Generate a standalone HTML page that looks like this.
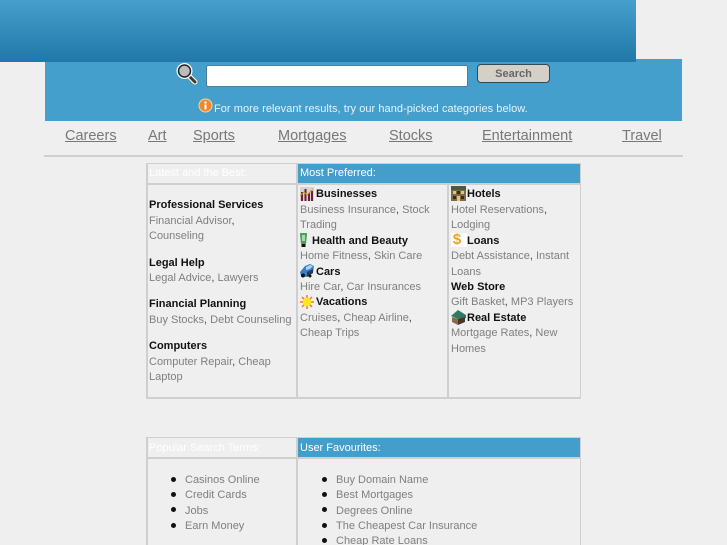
<!DOCTYPE html>
<html><head><meta charset="utf-8"><style>
html,body{margin:0;padding:0;width:727px;height:545px;overflow:hidden;background:#efefef;font-family:"Liberation Sans",sans-serif}
#w{position:absolute;left:0;top:0;width:727px;height:545px;overflow:hidden;filter:blur(.35px)}
.a{position:absolute}
.t{position:absolute;white-space:nowrap;line-height:16px;font-size:11px;color:#7f7f7f;margin-top:1px}
.b{color:#111;font-weight:bold}
.h{color:#fff;font-size:11px}
.d{color:#444}
.n{position:absolute;white-space:nowrap;font-size:14.5px;line-height:20px;color:#777;text-decoration:underline;top:126px}
.g{position:absolute;background:#cfcfcf}
.bl{position:absolute;background:#439ecb}
.dot{position:absolute;width:5px;height:5px;border-radius:50%;background:#111}
svg{position:absolute}
</style></head><body><div id="w">
<div class="a" style="left:45px;top:59px;width:637px;height:62px;background:#459fcc"></div>
<div class="a" style="left:0;top:0;width:636px;height:62px;background:linear-gradient(#469fcb,#1f78a9)"></div>

<svg style="left:176px;top:63px" width="23" height="22" viewBox="0 0 23 22"><path d="M12 12L19 19" stroke="#fff" stroke-width="5" stroke-linecap="round"/><path d="M12 12L19 19" stroke="#4a3520" stroke-width="3" stroke-linecap="round"/><circle cx="8.500" cy="8" r="6.500" fill="#c9ccce" stroke="#fff" stroke-width="3"/><circle cx="8.500" cy="8" r="6" fill="#b9bcbe" stroke="#222" stroke-width="1.500"/></svg>
<div class="a" style="left:206px;top:65px;width:260px;height:20px;background:#fff;border:1px solid #4d7f99;border-radius:2px"></div>
<div class="a" style="left:477px;top:64px;width:71px;height:17px;background:#d4d0c8;border:1px solid #2f4a58;border-radius:4px;text-align:center;font:bold 11px/19px 'Liberation Sans',sans-serif;color:#666">Search</div>
<svg style="left:198px;top:98px" width="15" height="15" viewBox="0 0 15 15"><circle cx="7.500" cy="7.500" r="6.500" fill="#f0892b" stroke="#f7d3a8"/><rect x="6.500" y="6.500" width="2" height="5" fill="#fff"/><rect x="6.500" y="3.500" width="2" height="2" fill="#fff"/></svg>
<div class="t" style="left:214px;top:100px;color:#e8f3f8;letter-spacing:.05px">For more relevant results, try our hand-picked categories below.</div>

<div class="n" style="left:65px">Careers</div>
<div class="n" style="left:148px">Art</div>
<div class="n" style="left:193px">Sports</div>
<div class="n" style="left:278px">Mortgages</div>
<div class="n" style="left:389px">Stocks</div>
<div class="n" style="left:482px">Entertainment</div>
<div class="n" style="left:622px">Travel</div>
<div class="g" style="left:44px;top:155px;width:639px;height:2px"></div>

<!-- table 1 -->
<div class="g" style="left:146px;top:163px;width:435px;height:1px"></div>
<div class="g" style="left:146px;top:397px;width:435px;height:2px"></div>
<div class="g" style="left:146px;top:163px;width:2px;height:236px"></div>
<div class="g" style="left:296px;top:163px;width:2px;height:236px"></div>
<div class="g" style="left:580px;top:163px;width:1px;height:236px"></div>
<div class="g" style="left:447px;top:183px;width:2px;height:216px"></div>
<div class="g" style="left:146px;top:183px;width:435px;height:2px"></div>
<div class="bl" style="left:298px;top:164px;width:282px;height:19px"></div>
<div class="t h" style="left:149px;top:164px">Latest and the Best:</div>
<div class="t h" style="left:300px;top:164px">Most Preferred:</div>

<div class="t b" style="left:149px;top:196px">Professional Services</div>
<div class="t" style="left:149px;top:212px">Financial Advisor<span class="d">,</span></div>
<div class="t" style="left:149px;top:227px">Counseling</div>
<div class="t b" style="left:149px;top:254px">Legal Help</div>
<div class="t" style="left:149px;top:269px">Legal Advice<span class="d">,</span> Lawyers</div>
<div class="t b" style="left:149px;top:295px">Financial Planning</div>
<div class="t" style="left:149px;top:311px">Buy Stocks<span class="d">,</span> Debt Counseling</div>
<div class="t b" style="left:149px;top:337px">Computers</div>
<div class="t" style="left:149px;top:353px">Computer Repair<span class="d">,</span> Cheap</div>
<div class="t" style="left:149px;top:368px">Laptop</div>

<div class="t b" style="left:316px;top:185px">Businesses</div>
<div class="t" style="left:300px;top:201px">Business Insurance<span class="d">,</span> Stock</div>
<div class="t" style="left:300px;top:216px">Trading</div>
<div class="t b" style="left:312px;top:232px">Health and Beauty</div>
<div class="t" style="left:300px;top:247px">Home Fitness<span class="d">,</span> Skin Care</div>
<div class="t b" style="left:316px;top:263px">Cars</div>
<div class="t" style="left:300px;top:278px">Hire Car<span class="d">,</span> Car Insurances</div>
<div class="t b" style="left:316px;top:293px">Vacations</div>
<div class="t" style="left:300px;top:309px">Cruises<span class="d">,</span> Cheap Airline<span class="d">,</span></div>
<div class="t" style="left:300px;top:324px">Cheap Trips</div>

<div class="t b" style="left:467px;top:185px">Hotels</div>
<div class="t" style="left:451px;top:201px">Hotel Reservations<span class="d">,</span></div>
<div class="t" style="left:451px;top:216px">Lodging</div>
<div class="t b" style="left:467px;top:232px">Loans</div>
<div class="t" style="left:451px;top:247px">Debt Assistance<span class="d">,</span> Instant</div>
<div class="t" style="left:451px;top:263px">Loans</div>
<div class="t b" style="left:451px;top:278px">Web Store</div>
<div class="t" style="left:451px;top:293px">Gift Basket<span class="d">,</span> MP3 Players</div>
<div class="t b" style="left:467px;top:309px">Real Estate</div>
<div class="t" style="left:451px;top:324px">Mortgage Rates<span class="d">,</span> New</div>
<div class="t" style="left:451px;top:340px">Homes</div>

<!-- icons -->
<svg style="left:300px;top:187px" width="14" height="14" viewBox="0 0 14 14"><rect width="14" height="14" fill="#d8d2d8"/><path d="M1 14V5h2v9zM4.500 14V2h2v12zM8 14V6h2v8zM11 14V4h2v10z" fill="#6d1f35"/><path d="M0 9L4 5l3 3 6-6" stroke="#c8a020" fill="none"/></svg>
<svg style="left:300px;top:233px" width="7" height="14" viewBox="0 0 7 14"><path d="M0 0h7v2l-1 9H1L0 2z" fill="#4f9e5e"/><path d="M2 2h3v6H2z" fill="#9fdcae"/><rect x="1.500" y="11" width="4" height="3" fill="#111"/></svg>
<svg style="left:300px;top:264px" width="15" height="14" viewBox="0 0 15 14"><path d="M0 8L5 2l5-2 4 2-1 7-6 4-6-1z" fill="#3a7fc4"/><path d="M6 3l4-2 3 1-3 3-4 1z" fill="#a9d4f0"/><path d="M7 8l6-3 0 4-6 4z" fill="#2a3a55"/><circle cx="3" cy="11.500" r="2" fill="#111"/><circle cx="10" cy="12" r="1.500" fill="#111"/></svg>
<svg style="left:300px;top:295px" width="14" height="14" viewBox="0 0 14 14"><path d="M7 0v14M0 7h14M2 2l10 10M12 2L2 12" stroke="#f07a20" stroke-width="1.500"/><circle cx="7" cy="7" r="4.200" fill="#ffe81a"/></svg>

<svg style="left:451px;top:186px" width="15" height="15" viewBox="0 0 15 15"><rect width="15" height="15" fill="#7d6a4a"/><rect x="0" y="0" width="15" height="4" fill="#4d5a40"/><rect x="2" y="5" width="3" height="3" fill="#e8c85a"/><rect x="6" y="5" width="3" height="3" fill="#3a2c18"/><rect x="10" y="5" width="3" height="3" fill="#e8c85a"/><rect x="2" y="10" width="3" height="3" fill="#3a2c18"/><rect x="6" y="10" width="3" height="5" fill="#e8c85a"/><rect x="10" y="10" width="3" height="3" fill="#3a2c18"/></svg>
<div class="a" style="left:451px;top:233px;width:16px;height:14px;background:#fff"></div>
<div class="a" style="left:451px;top:232px;width:12px;height:16px;font:bold 15px/16px 'Liberation Sans',sans-serif;color:#f0a020;text-align:center">$</div>
<svg style="left:451px;top:310px" width="15" height="15" viewBox="0 0 15 15"><path d="M0 6L7 0l8 5v3l-8 1z" fill="#2f7a62"/><path d="M1 7l6 2v6l-6-3z" fill="#8a6a48"/><path d="M7 9l7-2v5l-7 3z" fill="#4a3626"/></svg>

<!-- table 2 -->
<div class="g" style="left:146px;top:437px;width:435px;height:1px"></div>
<div class="g" style="left:146px;top:437px;width:2px;height:108px"></div>
<div class="g" style="left:296px;top:437px;width:2px;height:108px"></div>
<div class="g" style="left:580px;top:437px;width:1px;height:108px"></div>
<div class="g" style="left:146px;top:457px;width:435px;height:2px"></div>
<div class="bl" style="left:298px;top:438px;width:282px;height:19px"></div>
<div class="t h" style="left:149px;top:439px">Popular Search Terms:</div>
<div class="t h" style="left:300px;top:439px">User Favourites:</div>

<div class="dot" style="left:171px;top:477px"></div>
<div class="dot" style="left:171px;top:492px"></div>
<div class="dot" style="left:171px;top:507px"></div>
<div class="dot" style="left:171px;top:523px"></div>
<div class="t" style="left:185px;top:471px">Casinos Online</div>
<div class="t" style="left:185px;top:486px">Credit Cards</div>
<div class="t" style="left:185px;top:502px">Jobs</div>
<div class="t" style="left:185px;top:517px">Earn Money</div>

<div class="dot" style="left:322px;top:477px"></div>
<div class="dot" style="left:322px;top:492px"></div>
<div class="dot" style="left:322px;top:507px"></div>
<div class="dot" style="left:322px;top:523px"></div>
<div class="dot" style="left:322px;top:538px"></div>
<div class="t" style="left:336px;top:471px">Buy Domain Name</div>
<div class="t" style="left:336px;top:486px">Best Mortgages</div>
<div class="t" style="left:336px;top:502px">Degrees Online</div>
<div class="t" style="left:336px;top:517px">The Cheapest Car Insurance</div>
<div class="t" style="left:336px;top:532px">Cheap Rate Loans</div>
</div></body></html>
